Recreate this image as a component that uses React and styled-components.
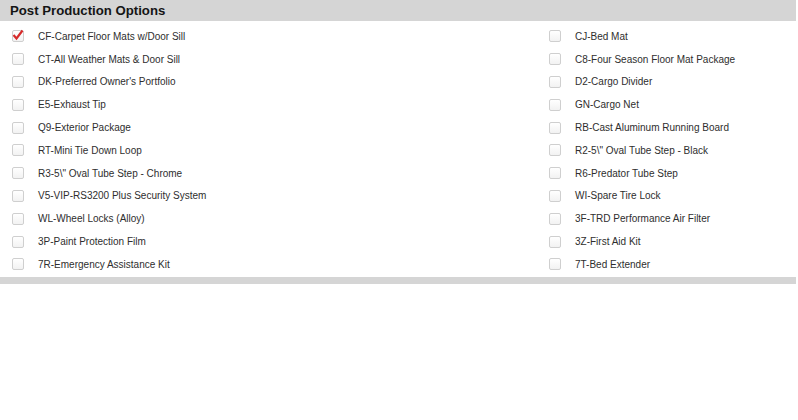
import styled, { createGlobalStyle } from 'styled-components';

const GlobalStyle = createGlobalStyle`
  body {
    margin: 0;
    background: #fff;
    font-family: Arial, "Liberation Sans", sans-serif;
  }
`;

const Panel = styled.div`
  width: 796px;
`;

const Header = styled.div`
  background: #d5d5d5;
  height: 21px;
  display: flex;
  align-items: center;
  padding-left: 10px;
  font-size: 13.2px;
  font-weight: bold;
  color: #151515;
`;

const Grid = styled.div`
  display: grid;
  grid-template-columns: 537px 1fr;
  grid-auto-rows: 22.8px;
  padding: 4px 0 1px;
`;

const Option = styled.label`
  display: flex;
  align-items: center;
  padding-left: 12px;
  font-size: 10px;
  color: #2e2e2e;
  cursor: pointer;
`;

const Box = styled.span`
  position: relative;
  width: 10px;
  height: 10px;
  border: 1px solid #cfcfcf;
  border-radius: 2px;
  background: linear-gradient(#fff, #f2f2f2);
  margin-right: 14px;
  flex: none;

  svg {
    position: absolute;
    left: -1px;
    top: -2px;
  }
`;

const Footer = styled.div`
  height: 7px;
  background: #d5d5d5;
`;

const left = [
  'CF-Carpet Floor Mats w/Door Sill',
  'CT-All Weather Mats & Door Sill',
  "DK-Preferred Owner's Portfolio",
  'E5-Exhaust Tip',
  'Q9-Exterior Package',
  'RT-Mini Tie Down Loop',
  'R3-5\\" Oval Tube Step - Chrome',
  'V5-VIP-RS3200 Plus Security System',
  'WL-Wheel Locks (Alloy)',
  '3P-Paint Protection Film',
  '7R-Emergency Assistance Kit',
];

const right = [
  'CJ-Bed Mat',
  'C8-Four Season Floor Mat Package',
  'D2-Cargo Divider',
  'GN-Cargo Net',
  'RB-Cast Aluminum Running Board',
  'R2-5\\" Oval Tube Step - Black',
  'R6-Predator Tube Step',
  'WI-Spare Tire Lock',
  '3F-TRD Performance Air Filter',
  '3Z-First Aid Kit',
  '7T-Bed Extender',
];

function Check() {
  return (
    <svg width="12" height="12" viewBox="0 0 12 12">
      <path d="M1.5 6 L4.5 9.5 L10.5 1.5" fill="none" stroke="#d62b2b" strokeWidth="2.2" />
    </svg>
  );
}

function Item({ text, checked }) {
  return (
    <Option>
      <Box>{checked && <Check />}</Box>
      {text}
    </Option>
  );
}

export default function App() {
  const rows = left.map((l, i) => [l, right[i]]);
  return (
    <Panel>
      <GlobalStyle />
      <Header>Post Production Options</Header>
      <Grid>
        {rows.map(([l, r], i) => [
          <Item key={`l${i}`} text={l} checked={i === 0} />,
          <Item key={`r${i}`} text={r} />,
        ])}
      </Grid>
      <Footer />
    </Panel>
  );
}
